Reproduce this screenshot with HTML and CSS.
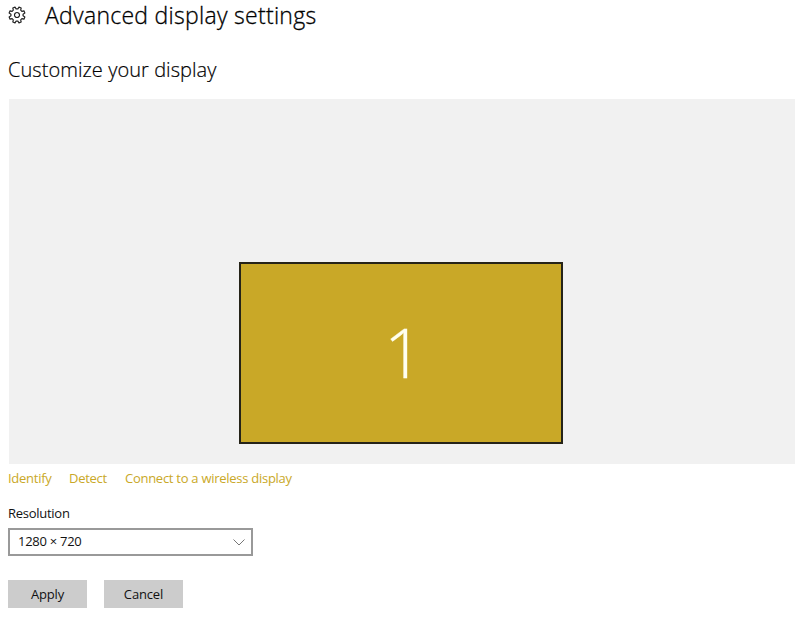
FILE: index.html
```html
<!DOCTYPE html>
<html lang="en">
<head>
<meta charset="utf-8">
<title>Advanced display settings</title>
<link rel="stylesheet" href="styles.css">
</head>
<body>
<header class="header">
<svg class="gear" viewBox="-10 -10 20 20"><path d="M6.730.95 8.730 2.180 7.710 4.640 5.430 4.090 4.090 5.430 4.640 7.710 2.180 8.730.95 6.730H-.95L-2.180 8.730-4.640 7.710-4.090 5.430-5.430 4.090-7.710 4.640-8.730 2.180-6.730.95V-.95L-8.730-2.180-7.710-4.640-5.430-4.090-4.090-5.430-4.640-7.710-2.180-8.730-.95-6.730H.95L2.180-8.730 4.640-7.710 4.090-5.430 5.430-4.090 7.710-4.640 8.730-2.180 6.730-.95z"/><circle r="2.800"/></svg>
<h1 class="title">Advanced display settings</h1>
</header>
<main>
<h2 class="subtitle">Customize your display</h2>
<section class="stage"><div class="monitor">1</div></section>
<nav class="links"><a class="identify">Identify</a><a class="detect">Detect</a><a class="connect">Connect to a wireless display</a></nav>
<label class="label">Resolution</label>
<div class="select"><span>1280 × 720</span><svg class="chevron" viewBox="0 0 12 7"><path d="M.5.5 6 6 11.500.5"/></svg></div>
<div class="buttons"><button>Apply</button><button>Cancel</button></div>
</main>
</body>
</html>
```
FILE: styles.css
```css
* { box-sizing: border-box; }
body { margin: 0; padding: 0 5px 0 8px; background: #fff; color: #111; font: 13px/18px "Open Sans", sans-serif; letter-spacing: -0.27px; }
.header { display: flex; height: 32px; }
.gear { width: 18px; height: 18px; margin-top: 6px; fill: none; stroke: #222; stroke-width: 1.3; stroke-linejoin: round; }
.title { margin: 0 0 0 19px; color: #000; font: 300 23px/31px "Open Sans", sans-serif; letter-spacing: 0.28px; -webkit-text-stroke: 0.3px #000; }
.subtitle { margin: 23px 0 0; color: #000; font: 300 20px/29px "Open Sans", sans-serif; letter-spacing: 0.06px; -webkit-text-stroke: 0.2px #000; }
.stage { height: 365px; margin: 15px 0 0 1px; background: #f1f1f1; display: flex; align-items: flex-end; padding: 0 0 20px 230px; }
.monitor { width: 324px; height: 182px; padding-left: 5px; border: 2px solid #252318; background: #c9a827; color: #fffff0; font: 300 69px/174px "Open Sans", sans-serif; text-align: center; -webkit-text-stroke: 0.3px #fffff0; }
.links { display: flex; margin-top: 5px; color: #c9a827; }
.identify { width: 61px; }
.detect { width: 56px; }
.label { display: block; margin-top: 17px; }
.select { width: 245px; height: 28px; margin-top: 6px; border: 2px solid #999; display: flex; align-items: center; justify-content: space-between; padding: 0 6px 2px 8px; }
.chevron { width: 12px; height: 7px; margin-top: 2px; fill: none; stroke: #777; }
.buttons { display: flex; gap: 17px; margin-top: 24px; }
button { width: 79px; height: 28px; border: 0; padding: 1px 0 0; background: #ccc; color: #111; font: 13px/27px "Open Sans", sans-serif; letter-spacing: -0.15px; }
```
